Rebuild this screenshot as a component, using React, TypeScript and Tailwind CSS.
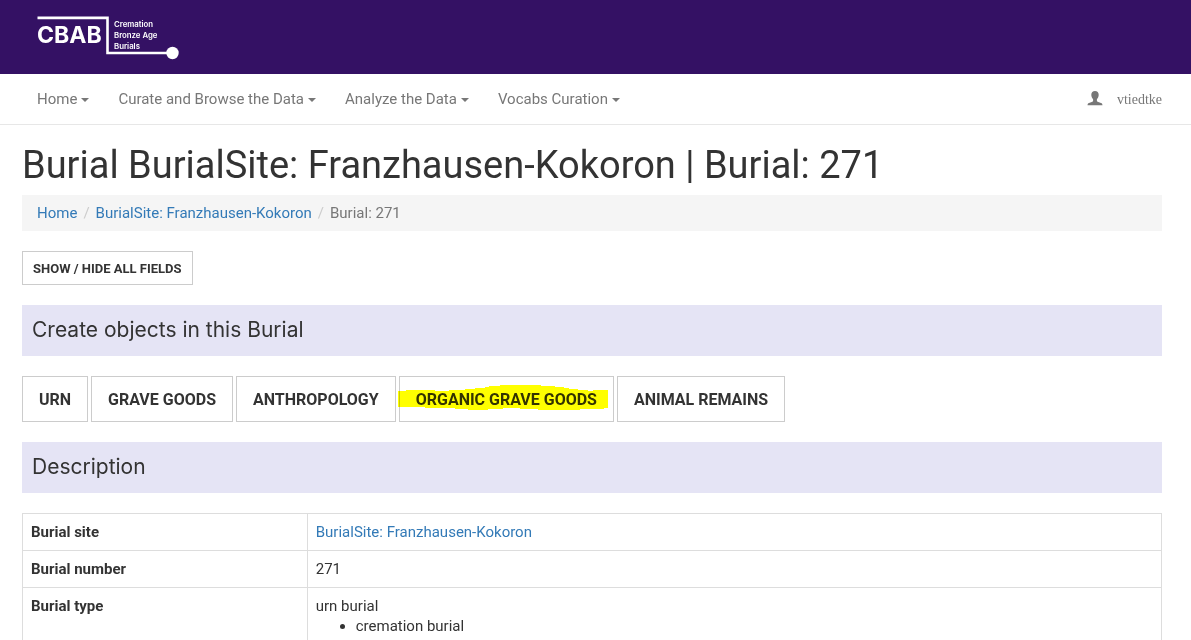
import React from "react";

const menus = ["Home", "Curate and Browse the Data", "Analyze the Data", "Vocabs Curation"];

function Logo() {
  return (
    <svg width="144" height="46" viewBox="0 0 144 46" role="img" aria-label="CBAB" className="block">
      <path d="M0.500 3.900H70.500V39H134" fill="none" stroke="#fff" strokeWidth="2.600" />
      <circle cx="135.500" cy="39" r="6.200" fill="#fff" />
      <g fill="#fff" fontFamily="Inter, sans-serif">
        <text x="0" y="29" fontSize="23" fontWeight="700">CBAB</text>
        <g fontSize="7.800" fontWeight="600">
          <text x="77" y="12.500">Cremation</text>
          <text x="77" y="23.500">Bronze Age</text>
          <text x="77" y="34.500">Burials</text>
        </g>
      </g>
    </svg>
  );
}

function Caret() {
  return <span aria-hidden="true" className="mt-[2px] ml-1 border-x-4 border-t-4 border-x-transparent border-t-[#777]" />;
}

function UserIcon() {
  return (
    <svg width="16" height="16" viewBox="0 0 16 16" fill="#777" aria-hidden="true" className="mb-[5px]">
      <path d="M8 1C5.700 1 4.300 2.500 4.300 4.800C4.300 6.600 5 8 6.100 9.200V10.700C6.100 11.200 5.900 11.500 5.400 11.700L2 13C1 13.400 0.600 14 0.500 15.200H15.500C15.400 14 15 13.400 14 13L10.600 11.700C10.100 11.500 9.900 11.200 9.900 10.700V9.200C11 8 11.700 6.600 11.700 4.800C11.700 2.500 10.300 1 8 1Z" />
    </svg>
  );
}

function SectionTitle({ children }: { children: React.ReactNode }) {
  return (
    <h2 className="mt-5 bg-[#e5e4f5] px-[10px] pt-3 pb-[14px] font-['Inter',sans-serif] text-[21px] leading-[25px] text-[#333]">
      {children}
    </h2>
  );
}

function ObjectButton({ children }: { children: React.ReactNode }) {
  return (
    <button type="button" className="border border-[#ccc] px-4 pt-[11px] pb-[9px] text-[16px] leading-6 font-bold uppercase">
      {children}
    </button>
  );
}

function Highlighted({ children }: { children: React.ReactNode }) {
  return (
    <span className="relative">
      <svg
        width="210"
        height="26"
        viewBox="0 0 210 26"
        aria-hidden="true"
        className="pointer-events-none absolute -top-[5px] -left-[18px] mix-blend-multiply"
      >
        <path
          fill="#ff0"
          d="M0 6H8V5H37V6H51V5H67V4H77V3H87V2H91V1H102V0H143V1H157V2H166V3H171V4H180V5H190V6H195V5H210V23H206V24H182V25H140V24H122V23H105V24H90V25H70V24H57V23H27V22H0Z"
        />
      </svg>
      {children}
    </span>
  );
}

function Row({ label, children }: { label: string; children: React.ReactNode }) {
  return (
    <tr>
      <th scope="row" className="w-1/4 border border-[#ddd] p-2 text-left align-top font-bold">{label}</th>
      <td className="border border-[#ddd] p-2 align-top">{children}</td>
    </tr>
  );
}

export default function App() {
  return (
    <div className="bg-white font-['Roboto',sans-serif] text-[15px] leading-5 text-[#333]">
      <header className="bg-[#341164] px-[37px] py-[14px]">
        <a href="#" className="block w-36"><Logo /></a>
      </header>
      <nav className="flex items-center justify-between border-b border-[#e7e7e7] pr-[29px] pl-[37px] text-[#777]">
        <ul className="flex gap-[29px]">
          {menus.map((m) => (
            <li key={m}>
              <button type="button" className="flex items-center py-[15px]">{m}<Caret /></button>
            </li>
          ))}
        </ul>
        <a href="#" className="flex items-center gap-[14px] pt-[2px] font-['Liberation_Serif',serif] text-[14px]">
          <UserIcon />vtiedtke
        </a>
      </nav>
      <main className="pr-[29px] pl-[22px]">
        <h1 className="pt-5 pb-[10px] text-[38px] leading-10">
          Burial BurialSite: Franzhausen-Kokoron | Burial: 271
        </h1>
        <nav aria-label="Breadcrumb" className="bg-[#f5f5f5] px-[15px] py-2">
          <ol className="flex">
            <li><a href="#" className="text-[#337ab7]">Home</a></li>
            <li><span className="px-[6px] text-[#ccc]">/</span><a href="#" className="text-[#337ab7]">BurialSite: Franzhausen-Kokoron</a></li>
            <li className="text-[#777]"><span className="px-[6px] text-[#ccc]">/</span>Burial: 271</li>
          </ol>
        </nav>
        <button type="button" className="mt-5 block border border-[#ccc] px-[10px] pt-[7px] pb-[5px] text-[13px] leading-5 font-bold uppercase">
          Show / Hide all fields
        </button>
        <SectionTitle>Create objects in this Burial</SectionTitle>
        <div className="mt-5 flex flex-wrap gap-[3px]">
          <ObjectButton>Urn</ObjectButton>
          <ObjectButton>Grave goods</ObjectButton>
          <ObjectButton>Anthropology</ObjectButton>
          <ObjectButton><Highlighted>Organic grave goods</Highlighted></ObjectButton>
          <ObjectButton>Animal remains</ObjectButton>
        </div>
        <SectionTitle>Description</SectionTitle>
        <table className="mt-5 w-full border-collapse">
          <tbody>
            <Row label="Burial site"><a href="#" className="text-[#337ab7]">BurialSite: Franzhausen-Kokoron</a></Row>
            <Row label="Burial number">271</Row>
            <Row label="Burial type">
              urn burial
              <ul className="list-disc pl-10"><li>cremation burial</li></ul>
            </Row>
          </tbody>
        </table>
      </main>
    </div>
  );
}
